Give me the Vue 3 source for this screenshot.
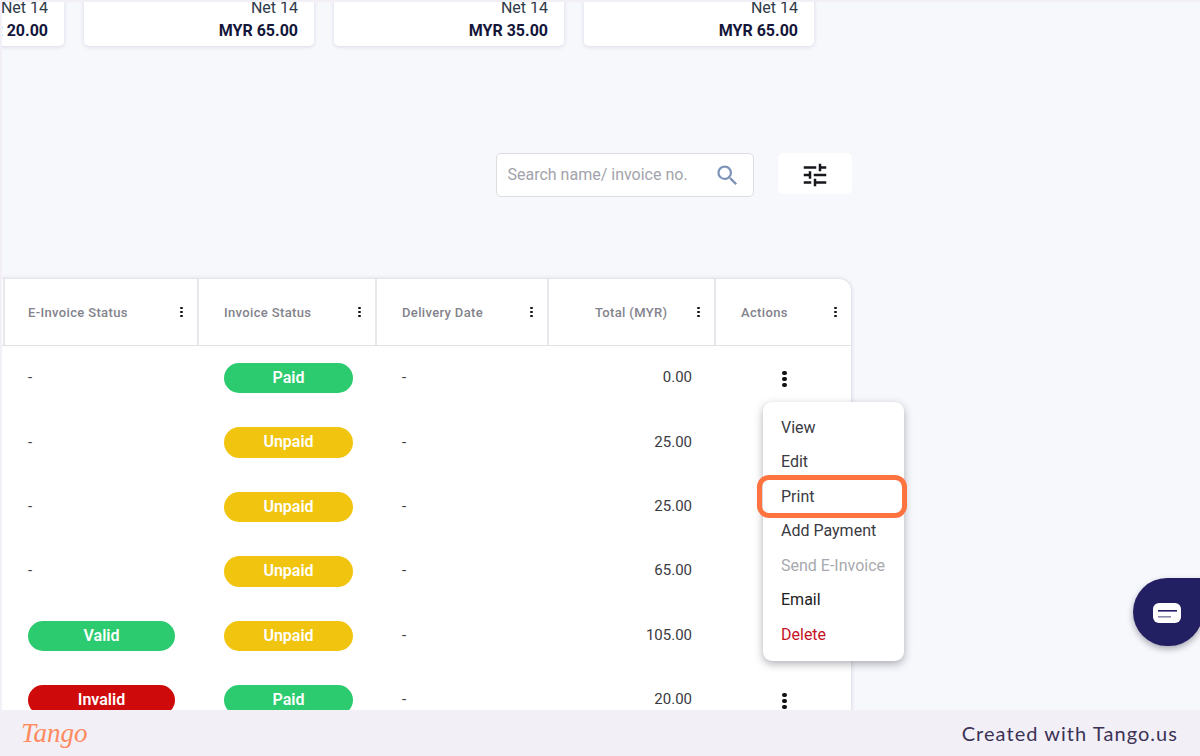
<script setup>
const cards = ["MYR 20.00", "MYR 65.00", "MYR 35.00", "MYR 65.00"];

const columns = [
  { label: "E-Invoice Status", cls: "col-einvoice" },
  { label: "Invoice Status", cls: "col-status" },
  { label: "Delivery Date", cls: "col-date" },
  { label: "Total (MYR)", cls: "col-total" },
  { label: "Actions", cls: "col-actions" },
];

const rows = [
  { einvoice: null, status: "Paid", total: "0.00" },
  { einvoice: null, status: "Unpaid", total: "25.00" },
  { einvoice: null, status: "Unpaid", total: "25.00" },
  { einvoice: null, status: "Unpaid", total: "65.00" },
  { einvoice: "Valid", status: "Unpaid", total: "105.00" },
  { einvoice: "Invalid", status: "Paid", total: "20.00" },
];

const menu = [
  { label: "View" },
  { label: "Edit" },
  { label: "Print" },
  { label: "Add Payment" },
  { label: "Send E-Invoice", cls: "menu__item--disabled" },
  { label: "Email", cls: "menu__item--email" },
  { label: "Delete", cls: "menu__item--danger" },
];
</script>

<template>
  <div class="page">
    <main class="main">
      <section class="cards">
        <div v-for="(amount, i) in cards" :key="i" class="card">
          <span class="card__term">Net 14</span>
          <strong class="card__amount">{{ amount }}</strong>
        </div>
      </section>

      <section class="toolbar">
        <div class="search">
          <span class="search__text">Search name/ invoice no.</span>
          <svg class="search__icon" viewBox="0 0 24 24">
            <path d="M15.5 14h-.79l-.28-.27A6.47 6.47 0 0 0 16 9.5 6.5 6.5 0 1 0 9.5 16c1.61 0 3.09-.59 4.23-1.57l.27.28v.79l5 4.99L20.49 19l-4.99-5zm-6 0C7.01 14 5 11.99 5 9.5S7.01 5 9.5 5 14 7.01 14 9.5 11.99 14 9.5 14z" />
          </svg>
        </div>
        <div class="filter">
          <svg class="filter__icon" viewBox="0 0 24 24">
            <path d="M3 17v2h6v-2H3zM3 5v2h10V5H3zm10 16v-2h8v-2h-8v-2h-2v6h2zM7 9v2H3v2h4v2h2V9H7zm14 4v-2H11v2h10zm-6-4h2V7h4V5h-4V3h-2v6z" />
          </svg>
        </div>
      </section>

      <section class="table">
        <div class="table__row table__row--head">
          <div v-for="col in columns" :key="col.label" class="th" :class="col.cls">
            <span class="th__label">{{ col.label }}</span>
            <span class="dots dots--small"><i></i><i></i><i></i></span>
          </div>
        </div>
        <div v-for="(row, i) in rows" :key="i" class="table__row">
          <div class="td col-einvoice">
            <span v-if="row.einvoice" class="pill pill--wide" :class="'pill--' + row.einvoice.toLowerCase()">{{ row.einvoice }}</span>
            <span v-else class="td__text">-</span>
          </div>
          <div class="td col-status">
            <span class="pill" :class="'pill--' + row.status.toLowerCase()">{{ row.status }}</span>
          </div>
          <div class="td col-date"><span class="td__text">-</span></div>
          <div class="td col-total"><span class="td__text">{{ row.total }}</span></div>
          <div class="td col-actions">
            <span class="dots"><i></i><i></i><i></i></span>
          </div>
        </div>
      </section>
    </main>

    <footer class="footer">
      <span class="footer__logo">Tango</span>
      <span class="footer__credit">Created with Tango.us</span>
    </footer>

    <!-- open row menu, floats over the table -->
    <ul class="menu">
      <li v-for="item in menu" :key="item.label" class="menu__item" :class="item.cls">{{ item.label }}</li>
    </ul>
    <div class="highlight"></div>

    <div class="chat">
      <svg class="chat__icon" viewBox="0 0 28 20">
        <rect x="0" y="0" width="28" height="20" rx="6" fill="#fff" />
        <rect x="5" y="7" width="19" height="1.6" fill="#231f63" />
        <rect x="5" y="13" width="13" height="1.6" fill="#8d8aa8" />
      </svg>
    </div>
  </div>
</template>

<style>
body {
  margin: 0;
}
</style>

<style scoped>
.page {
  position: relative;
  width: 1200px;
  height: 756px;
  display: flex;
  flex-direction: column;
  overflow: hidden;
  background: #f2f0f6;
  font-family: Roboto, "Liberation Sans", sans-serif;
  color: #2b2b33;
}

.main {
  flex: 1;
  min-height: 0;
  margin: 2px 0 0 2px;
  overflow: hidden;
  background: #f7f8fc;
}

.cards {
  display: flex;
  gap: 20px;
  margin: -56px 0 0 -168px;
}

.card {
  width: 230px;
  height: 100px;
  box-sizing: border-box;
  padding: 52px 16px 0 0;
  display: flex;
  flex-direction: column;
  align-items: flex-end;
  flex-shrink: 0;
  background: #fff;
  border-radius: 5px;
  box-shadow: 0 1px 4px rgba(60, 70, 120, 0.16);
}

.card__term {
  font-size: 16px;
  line-height: 20px;
  color: #2f3a4a;
}

.card__amount {
  margin-top: 3px;
  font-size: 16px;
  line-height: 20px;
  font-weight: 700;
  color: #14163a;
}

.toolbar {
  display: flex;
  align-items: flex-start;
  gap: 24px;
  margin: 107px 0 0 493.5px;
}

.search {
  width: 258.5px;
  height: 44px;
  box-sizing: border-box;
  display: flex;
  align-items: center;
  justify-content: space-between;
  padding: 0 12px 0 11px;
  background: #fff;
  border: 1px solid #dcdde2;
  border-radius: 5px;
}

.search__text {
  padding-bottom: 2px;
  font-size: 16px;
  color: #a2a3ab;
}

.search__icon {
  width: 27px;
  height: 27px;
  fill: #7d93b8;
}

.filter {
  width: 74px;
  height: 41px;
  display: flex;
  align-items: center;
  justify-content: center;
  background: #fff;
  border-radius: 5px;
}

.filter__icon {
  width: 30px;
  height: 30px;
  margin-top: 2px;
  fill: #16161c;
}

.table {
  width: 850px;
  margin: 82px 0 0 -1px;
  background: #fff;
  border-radius: 0 12px 0 0;
  box-shadow: 0 0 4px rgba(60, 60, 90, 0.22);
}

.table__row {
  display: grid;
  grid-template-columns: 196px 178px 172px 167px 137px;
  height: 64.4px;
  align-items: center;
}

.table__row--head {
  height: 67px;
  align-items: stretch;
  border-bottom: 1px solid #e2e2e6;
  box-sizing: border-box;
}

.th {
  display: flex;
  align-items: center;
  justify-content: space-between;
  padding: 0 14px 0 25px;
  font-size: 13px;
  font-weight: 500;
  letter-spacing: 0.35px;
  color: #83838c;
  border-left: 2px solid #e8e8ec;
}

.th.col-einvoice {
  margin-left: 2px;
  padding-left: 23px;
}

.th.col-total .th__label {
  margin-left: auto;
  margin-right: 30px;
}

.td {
  padding-left: 27px;
  font-size: 15px;
  color: #3a3a42;
}

.td__text {
  position: relative;
  top: -1px;
}

.td.col-total {
  padding: 0 22px 0 0;
  text-align: right;
}

.td.col-actions {
  padding-left: 68px;
}

.pill {
  display: block;
  width: 129px;
  height: 30.5px;
  border-radius: 16px;
  font-size: 16px;
  font-weight: 600;
  line-height: 29.5px;
  text-align: center;
  color: #fff;
}

.pill--wide {
  width: 147px;
}

.pill--paid,
.pill--valid {
  background: #2ccb6f;
}

.pill--unpaid {
  background: #f1c40f;
}

.pill--invalid {
  background: #cf0a0a;
}

.dots {
  display: inline-flex;
  flex-direction: column;
  align-items: center;
  gap: 1.5px;
  vertical-align: middle;
}

.dots i {
  width: 4.5px;
  height: 4.5px;
  border-radius: 50%;
  background: #111;
}

.dots--small i {
  width: 2.6px;
  height: 2.6px;
}

.footer {
  flex-shrink: 0;
  height: 46px;
  display: flex;
  align-items: center;
  justify-content: space-between;
  padding: 0 22px 0 21px;
}

.footer__logo {
  font-family: "Liberation Serif", serif;
  font-style: italic;
  font-size: 27px;
  color: #ff8a5f;
}

.footer__credit {
  padding-bottom: 1px;
  font-family: Lato, sans-serif;
  font-size: 20px;
  letter-spacing: 1.05px;
  color: #3c3256;
}

.menu {
  position: absolute;
  left: 763px;
  top: 402px;
  width: 141px;
  height: 259px;
  box-sizing: border-box;
  margin: 0;
  padding: 8.5px 0 0 18px;
  list-style: none;
  background: #fff;
  border-radius: 9px;
  box-shadow: 0 3px 8px rgba(30, 30, 50, 0.35);
}

.menu__item {
  height: 34.5px;
  line-height: 34.5px;
  font-size: 16px;
  color: #3a3a42;
}

.menu__item--disabled {
  color: #a9a9ae;
}

.menu__item--email {
  color: #1c1c22;
}

.menu__item--danger {
  color: #c5121f;
}

.highlight {
  position: absolute;
  left: 757px;
  top: 475px;
  width: 150px;
  height: 43px;
  box-sizing: border-box;
  border: 5px solid #ff7340;
  border-radius: 12px;
}

.chat {
  position: absolute;
  left: 1133px;
  top: 578px;
  width: 70px;
  height: 68px;
  display: flex;
  align-items: center;
  justify-content: flex-start;
  padding-left: 20px;
  box-sizing: border-box;
  background: #231f63;
  border-radius: 34px 4px 34px 34px;
  box-shadow: 0 3px 6px rgba(30, 30, 50, 0.35);
}

.chat__icon {
  width: 28px;
  height: 20px;
  margin-top: 2px;
}
</style>
